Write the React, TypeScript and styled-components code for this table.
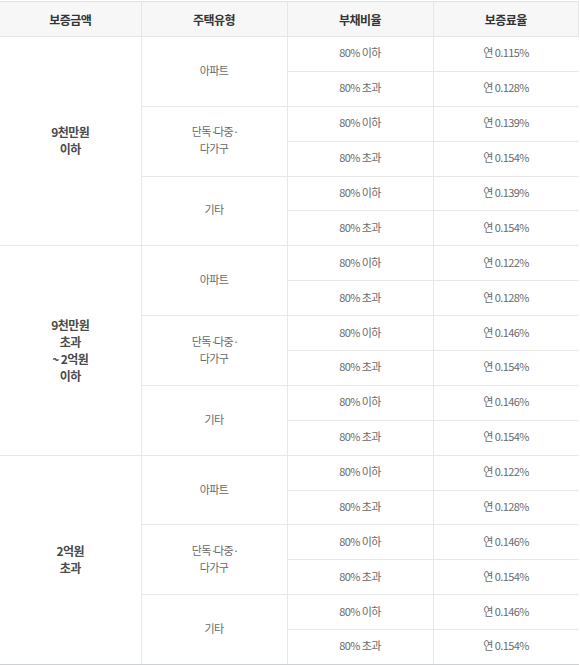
import React from "react";
import styled, { createGlobalStyle } from "styled-components";

const GlobalStyle = createGlobalStyle`
  html, body {
    margin: 0;
    padding: 0;
    background: #ffffff;
  }
  body {
    font-family: "Noto Sans CJK KR", "Noto Sans", sans-serif;
  }
`;

const Wrap = styled.div`
  width: 580px;
  padding-top: 1px;
`;

const Table = styled.table`
  width: 579px;
  border-collapse: collapse;
  table-layout: fixed;
  border-top: 1px solid #e2e2e2;
  border-bottom: 2px solid #cfd0d6;
`;

const Th = styled.th`
  height: 34px;
  padding: 0;
  background: #f7f7f7;
  border-bottom: 1px solid #e6e6e6;
  border-left: 1px solid #e6e6e6;
  color: #333333;
  font-size: 12px;
  font-weight: 700;
  letter-spacing: -0.5px;
  text-align: center;
  &:first-child {
    border-left: none;
  }
  &:last-child {
    border-right: 1px solid #e6e6e6;
  }
`;

const Tr = styled.tr`
  height: 34.9px;
`;

const Td = styled.td<{ $strong?: boolean }>`
  padding: 0 0 2px;
  border: 1px solid #e8e8e8;
  color: ${(p) => (p.$strong ? "#4a4a4a" : "#6a6a6a")};
  font-size: ${(p) => (p.$strong ? "12px" : "11px")};
  font-weight: ${(p) => (p.$strong ? 700 : 400)};
  line-height: 17px;
  letter-spacing: -0.6px;
  text-align: center;
  vertical-align: middle;
  &:first-child {
    border-left: none;
  }
  &:last-child {
    border-right: none;
  }
`;

const Dot = styled.span`
  letter-spacing: -3px;
`;

type Group = {
  amount: string[];
  rates: [string, string][];
};

const types: React.ReactNode[] = [
  "아파트",
  <>
    단독<Dot>·</Dot>다중<Dot>·</Dot>
    <br />
    다가구
  </>,
  "기타",
];

const groups: Group[] = [
  {
    amount: ["9천만원", "이하"],
    rates: [
      ["0.115", "0.128"],
      ["0.139", "0.154"],
      ["0.139", "0.154"],
    ],
  },
  {
    amount: ["9천만원", "초과", "~ 2억원", "이하"],
    rates: [
      ["0.122", "0.128"],
      ["0.146", "0.154"],
      ["0.146", "0.154"],
    ],
  },
  {
    amount: ["2억원", "초과"],
    rates: [
      ["0.122", "0.128"],
      ["0.146", "0.154"],
      ["0.146", "0.154"],
    ],
  },
];

const Lines = ({ lines }: { lines: string[] }) => (
  <>
    {lines.map((l, i) => (
      <React.Fragment key={i}>
        {i > 0 && <br />}
        {l}
      </React.Fragment>
    ))}
  </>
);

export default function App() {
  return (
    <>
      <GlobalStyle />
      <Wrap>
        <Table>
          <colgroup>
            <col style={{ width: 141 }} />
            <col style={{ width: 146 }} />
            <col style={{ width: 146 }} />
            <col />
          </colgroup>
          <thead>
            <tr>
              <Th>보증금액</Th>
              <Th>주택유형</Th>
              <Th>부채비율</Th>
              <Th>보증료율</Th>
            </tr>
          </thead>
          <tbody>
            {groups.map((g, gi) =>
              g.rates.map((pair, ti) => (
                <React.Fragment key={`${gi}-${ti}`}>
                  <Tr>
                    {ti === 0 && (
                      <Td $strong rowSpan={6}>
                        <Lines lines={g.amount} />
                      </Td>
                    )}
                    <Td rowSpan={2}>{types[ti]}</Td>
                    <Td>80% 이하</Td>
                    <Td>연 {pair[0]}%</Td>
                  </Tr>
                  <Tr>
                    <Td>80% 초과</Td>
                    <Td>연 {pair[1]}%</Td>
                  </Tr>
                </React.Fragment>
              ))
            )}
          </tbody>
        </Table>
      </Wrap>
    </>
  );
}
